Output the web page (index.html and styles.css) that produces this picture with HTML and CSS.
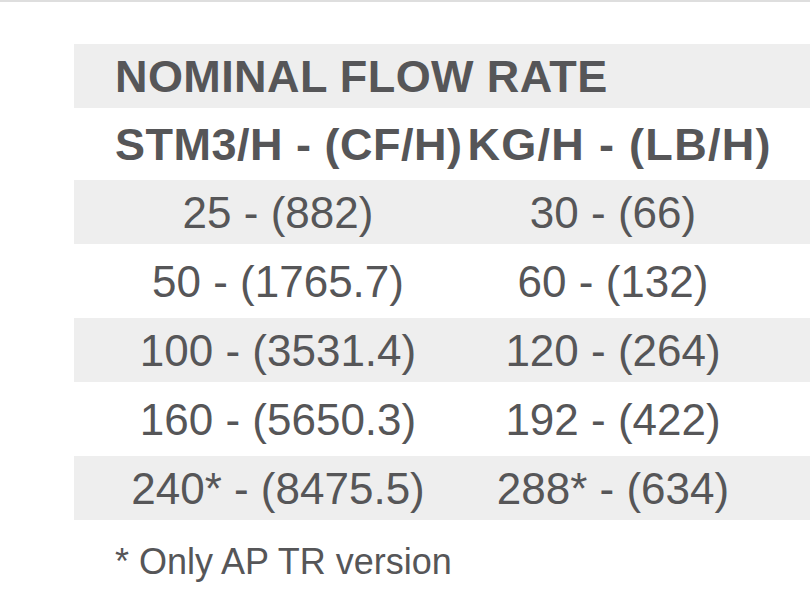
FILE: index.html
```html
<!DOCTYPE html>
<html>
<head>
<meta charset="utf-8">
<link rel="stylesheet" href="styles.css">
</head>
<body>
<div class="page">
  <div class="flow-table">
    <div class="row head shade">
      <div class="title">NOMINAL FLOW RATE</div>
    </div>
    <div class="row head units">
      <div class="title"><span class="unit-a">STM3/H - (CF/H)</span><span class="unit-b">KG/H - (LB/H)</span></div>
    </div>
    <div class="row data shade short">
      <div class="cell">25 - (882)</div>
      <div class="cell">30 - (66)</div>
    </div>
    <div class="row data tall">
      <div class="cell">50 - (1765.7)</div>
      <div class="cell">60 - (132)</div>
    </div>
    <div class="row data shade short">
      <div class="cell">100 - (3531.4)</div>
      <div class="cell">120 - (264)</div>
    </div>
    <div class="row data tall">
      <div class="cell">160 - (5650.3)</div>
      <div class="cell">192 - (422)</div>
    </div>
    <div class="row data shade short">
      <div class="cell">240* - (8475.5)</div>
      <div class="cell">288* - (634)</div>
    </div>
  </div>
  <p class="note">* Only AP TR version</p>
</div>
</body>
</html>
```

FILE: styles.css
```css
html, body {
  margin: 0;
  padding: 0;
  background: #ffffff;
  overflow: hidden;
}

body {
  font-family: "Liberation Sans", Arial, sans-serif;
  color: #565658;
  width: 810px;
  height: 605px;
}

.page {
  border-top: 2px solid #dedede;
  padding-top: 42px;
  padding-left: 74px;
}

.flow-table {
  display: flex;
  flex-direction: column;
}

.row {
  display: grid;
  grid-template-columns: 408px 262px 1fr;
  align-items: center;
}

.shade {
  background: #eeeeee;
}

.head {
  font-weight: bold;
  font-size: 45px;
  line-height: 1;
}

.head .title {
  grid-column: 1 / 4;
  padding-left: 41px;
  white-space: nowrap;
  letter-spacing: 0.4px;
}

.head.shade {
  height: 64px;
}

.units {
  height: 72px;
}

.units .unit-a {
  letter-spacing: 0.5px;
}

.units .unit-b {
  margin-left: 5px;
  letter-spacing: 1.3px;
}

.data {
  font-size: 44px;
  line-height: 1;
}

.data .cell {
  text-align: center;
  white-space: nowrap;
  padding-top: 2px;
}

.short {
  height: 64px;
}

.tall {
  height: 74px;
}

.note {
  margin: 0;
  padding-top: 24px;
  padding-left: 41px;
  font-size: 36px;
  line-height: 1;
}
```
